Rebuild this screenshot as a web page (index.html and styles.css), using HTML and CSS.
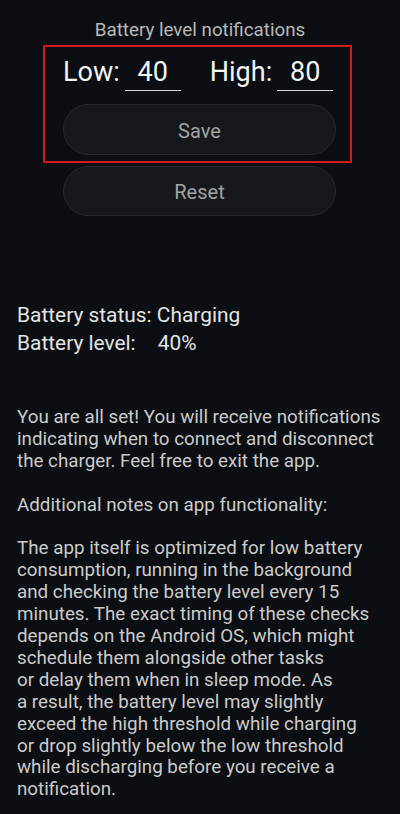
FILE: index.html
```html
<!DOCTYPE html>
<html lang="en">
<head>
  <meta charset="UTF-8">
  <title>Battery level notifications</title>
  <link rel="stylesheet" href="styles.css">
</head>
<body>
  <div class="screen">
    <h1 class="title">Battery level notifications</h1>

    <div class="highlight">
      <div class="levels">
        <label class="level">Low: <input class="level-input" type="text" value="40"></label>
        <label class="level">High: <input class="level-input" type="text" value="80"></label>
      </div>
      <button class="pill">Save</button>
    </div>
    <button class="pill reset">Reset</button>

    <div class="status">
      <div>Battery status: Charging</div>
      <div>Battery level:<span class="level-value">40%</span></div>
    </div>

    <div class="notes">
      <p>You are all set! You will receive notifications<br>indicating when to connect and disconnect<br>the charger. Feel free to exit the app.</p>
      <p>Additional notes on app functionality:</p>
      <p>The app itself is optimized for low battery<br>consumption, running in the background<br>and checking the battery level every 15<br>minutes. The exact timing of these checks<br>depends on the Android OS, which might<br>schedule them alongside other tasks<br>or delay them when in sleep mode. As<br>a result, the battery level may slightly<br>exceed the high threshold while charging<br>or drop slightly below the low threshold<br>while discharging before you receive a<br>notification.</p>
    </div>
  </div>
</body>
</html>
```

FILE: styles.css
```css
body {
  margin: 0;
  background-color: #0b0e12;
  font-family: Roboto, 'Noto Sans', sans-serif;
  color: #e2e2e2;
}

.screen {
  width: 400px;
  height: 814px;
  overflow: hidden;
  display: flex;
  flex-direction: column;
}

.screen > * {
  flex-shrink: 0;
}

.title {
  margin: 0;
  padding-top: 19px;
  height: 26px;
  line-height: 22px;
  font-size: 18.8px;
  font-weight: normal;
  text-align: center;
  color: #b9b9b9;
}

.highlight {
  margin-left: 43px;
  width: 279px;
  border: 2px solid #cf1b1f;
  padding: 0 8px 6px 18px;
  display: flex;
  flex-direction: column;
}

.levels {
  display: flex;
  gap: 29px;
  height: 44px;
  align-items: flex-end;
  margin-bottom: 13px;
}

.level {
  display: flex;
  align-items: baseline;
  gap: 5px;
  font-size: 27px;
  line-height: 32px;
  color: #f4f4f4;
}

.level-input {
  width: 56px;
  padding: 0 0 2px;
  margin: 0;
  background: transparent;
  border: none;
  border-bottom: 1px solid #d8d8d8;
  font-family: inherit;
  font-size: 27px;
  line-height: 32px;
  color: #f4f4f4;
  text-align: center;
  outline: none;
}

.pill {
  width: 273px;
  height: 51px;
  padding: 2px 0 0;
  background-color: #15181c;
  border: 1px solid #26292d;
  border-radius: 26px;
  font-family: inherit;
  font-size: 20px;
  color: #a3a3a3;
  cursor: pointer;
}

.reset {
  margin: 3px 0 0 63px;
  height: 50px;
}

.status {
  margin-top: 85px;
  padding-left: 17px;
  font-size: 20.9px;
  line-height: 28px;
  color: #e4e4e4;
}

.level-value {
  margin-left: 22px;
}

.notes {
  margin-top: 50px;
  padding-left: 17px;
  font-size: 18.8px;
  line-height: 21.9px;
  color: #cbcbcb;
  white-space: nowrap;
}

.notes p {
  margin: 0 0 21.9px;
}
```
